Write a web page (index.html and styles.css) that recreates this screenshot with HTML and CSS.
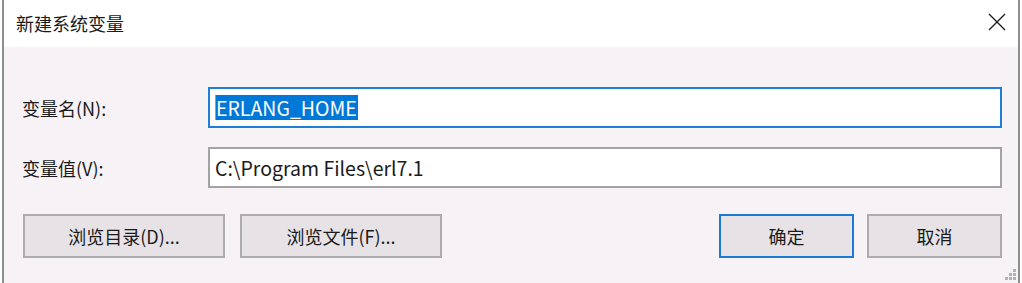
FILE: index.html
```html
<!DOCTYPE html>
<html lang="zh-CN">
<head>
    <meta charset="UTF-8">
    <title>新建系统变量</title>
    <link rel="stylesheet" href="styles.css">
</head>
<body>

    <div class="window">
        <!-- title bar -->
        <div class="titlebar">
            <span class="title">新建系统变量</span>
            <svg class="close" width="18" height="18" viewBox="0 0 18 18">
                <path d="M1 1 L17 17 M17 1 L1 17" stroke="#1a1a1a" stroke-width="1.3" fill="none"/>
            </svg>
        </div>

        <div class="content">
            <div class="fields">
                <label class="label">变量名(N):</label>
                <div class="field focused"><span class="caret"></span><span class="selected">ERLANG_HOME</span></div>

                <label class="label">变量值(V):</label>
                <div class="field">C:\Program Files\erl7.1</div>
            </div>

            <div class="buttons">
                <div class="left-group">
                    <button class="btn browse">浏览目录(D)...</button>
                    <button class="btn browse">浏览文件(F)...</button>
                </div>
                <div class="right-group">
                    <button class="btn small default">确定</button>
                    <button class="btn small">取消</button>
                </div>
            </div>

            <!-- resize grip -->
            <svg class="grip" width="14" height="14" viewBox="0 0 14 14">
                <rect x="10" y="2" width="3" height="3" fill="#b4b0b4"/>
                <rect x="6" y="6" width="3" height="3" fill="#b4b0b4"/>
                <rect x="10" y="6" width="3" height="3" fill="#b4b0b4"/>
                <rect x="2" y="10" width="3" height="3" fill="#b4b0b4"/>
                <rect x="6" y="10" width="3" height="3" fill="#b4b0b4"/>
                <rect x="10" y="10" width="3" height="3" fill="#b4b0b4"/>
            </svg>
        </div>
    </div>

</body>
</html>
```

FILE: styles.css
```css
body {
    margin: 0;
    padding: 0;
    background: #ffffff;
    font-family: "Noto Sans CJK SC", "Noto Sans", sans-serif;
    color: #1a1a1a;
}
.window {
    margin-left: 2px;
    width: 1014px;
    height: 283px;
    border-left: 2px solid #8e8e8e;
    border-right: 2px solid #8e8e8e;
    display: flex;
    flex-direction: column;
}
.titlebar {
    height: 47px;
    background: #ffffff;
    display: flex;
    align-items: center;
    justify-content: space-between;
    padding-left: 12px;
    padding-right: 12px;
}
.title {
    font-size: 18px;
    margin-top: -2px;
}
.close {
    margin-top: -3px;
}
.content {
    flex: 1;
    background: #f6f2f6;
    padding: 40px 16px 0 18px;
    position: relative;
}
.fields {
    display: grid;
    grid-template-columns: 186px 1fr;
    row-gap: 19px;
    align-items: center;
}
.label {
    font-size: 18px;
}
.field {
    height: 37px;
    border: 2px solid #a3a3a3;
    background: #ffffff;
    font-size: 19.5px;
    display: flex;
    align-items: center;
    padding-left: 5px;
}
.field.focused {
    border-color: #1d7fd8;
}
.caret {
    width: 1px;
    height: 25px;
    background: #f28c1e;
}
.selected {
    background: #0078d7;
    color: #ffffff;
    height: 25px;
    line-height: 25px;
    padding-right: 1px;
}
.buttons {
    margin-top: 26px;
    display: flex;
    justify-content: space-between;
}
.left-group {
    display: flex;
    gap: 15px;
    margin-left: 1px;
}
.right-group {
    display: flex;
    gap: 13px;
}
.btn {
    height: 44px;
    background: #e6e2e6;
    border: 2px solid #adadad;
    font-family: "Noto Sans CJK SC", "Noto Sans", sans-serif;
    font-size: 18px;
    color: #1a1a1a;
    padding: 0;
}
.browse {
    width: 202px;
}
.small {
    width: 135px;
}
.default {
    border-color: #1a7ad6;
}
.grip {
    position: absolute;
    right: 1px;
    bottom: 2px;
}
```
